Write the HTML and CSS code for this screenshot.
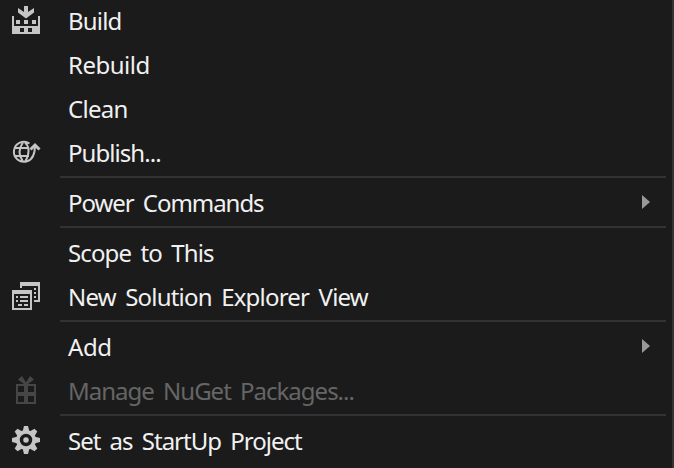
FILE: index.html
```html
<!DOCTYPE html>
<html lang="en">
<head>
<meta charset="utf-8">
<title>Project menu</title>
<link rel="stylesheet" href="styles.css">
</head>
<body>
<ul class="menu" role="menu">
  <li class="item" role="menuitem">
    <svg class="icon" viewBox="0 0 60 44"><path fill-rule="evenodd" d="M12 16h2v10h24V16h2v18H12zM20 28v4h4v-4zM28 28v4h4v-4zM16 20h4v4h-4zM24 20h4v4h-4zM32 20h4v4h-4zM24 6h4v6l6-4v4.500l-8 6-8-6V8l6 4z"/></svg>
    <span class="label build">Build</span>
  </li>
  <li class="item" role="menuitem"><span class="icon"></span><span class="label rebuild">Rebuild</span></li>
  <li class="item" role="menuitem"><span class="icon"></span><span class="label clean">Clean</span></li>
  <li class="item" role="menuitem">
    <svg class="icon line" viewBox="0 0 60 44"><path d="M29.500 11.500A10 10 0 1 0 27 29.300Q35 27 35 13M23 10.500q-7 9.500 0 19M25 10.500q5 4.500 3 12.500-1 4-3 6.500M15 16H29M15 24H29"/><path class="tip" d="M30.500 17.500l4.500-4.500 4.500 4.500"/></svg>
    <span class="label publish">Publish...</span>
  </li>
  <li class="separator" role="separator"></li>
  <li class="item" role="menuitem"><span class="icon"></span><span class="label power">Power Commands</span><span class="arrow"></span></li>
  <li class="separator" role="separator"></li>
  <li class="item" role="menuitem"><span class="icon"></span><span class="label scope">Scope to This</span></li>
  <li class="item" role="menuitem">
    <svg class="icon" viewBox="0 0 60 44"><path fill-rule="evenodd" d="M20 6h20v20h-6v-2h4V10H22v2h-2zM34 12h2v2h-2zM34 16h2v2h-2zM34 20h2v2h-2zM12 14h20v20H12zM14 18v14h16V18zM16 20h2v2h-2zM20 20h8v2h-8zM16 24h2v2h-2zM20 24h8v2h-8zM18 28h4v2h-4zM24 28h4v2h-4z"/></svg>
    <span class="label view">New Solution Explorer View</span>
  </li>
  <li class="separator" role="separator"></li>
  <li class="item" role="menuitem"><span class="icon"></span><span class="label add">Add</span><span class="arrow"></span></li>
  <li class="item disabled" role="menuitem" aria-disabled="true">
    <svg class="icon" viewBox="0 0 60 44"><path fill-rule="evenodd" d="M16 14h20v20H16zM18 16v6h6v-6zM28 16v6h6v-6zM18 26v6h6v-6zM28 26v6h6v-6zM18 9.500L22 6l4 6.500L30 6l4 3.500-6 4.500h-4z"/></svg>
    <span class="label manage">Manage NuGet Packages...</span>
  </li>
  <li class="separator" role="separator"></li>
  <li class="item" role="menuitem">
    <svg class="icon" viewBox="0 0 60 44"><g transform="translate(26 20)"><g id="teeth"><path id="tooth" d="M-3.500-8l1.500-6h4l1.500 6v16l-1.500 6h-4l-1.500-6z"/><use href="#tooth" transform="rotate(90)"/></g><use href="#teeth" transform="rotate(45)"/><circle r="10"/><circle class="hub" r="4.500"/></g></svg>
    <span class="label startup">Set as StartUp Project</span>
  </li>
</ul>
</body>
</html>
```
FILE: styles.css
```css
* { box-sizing: border-box; }

body {
  margin: 0;
  background: #1b1b1c;
  overflow: hidden;
}

.menu {
  height: 468px;
  margin: 0;
  padding: 0;
  list-style: none;
  border-right: 2px solid #333337;
  color: #f1f1f1;
  font: 24px/42px "Noto Sans", "Open Sans", sans-serif;
}

.item {
  display: flex;
  height: 44px;
  padding-right: 22px;
}

.icon {
  flex: none;
  width: 60px;
  height: 44px;
  fill: #c5c5c5;
}

.line {
  fill: none;
  stroke: #c5c5c5;
  stroke-width: 2;
}

.tip { stroke-width: 3; }

.hub {
  fill: none;
  stroke: #1b1b1c;
  stroke-width: 3.500;
}

.label {
  padding-left: 8px;
  white-space: nowrap;
  word-spacing: 4px;
  letter-spacing: -0.8px;
}

.rebuild { letter-spacing: -0.5px; }
.clean { letter-spacing: -0.7px; }
.publish { letter-spacing: -0.95px; }
.power { letter-spacing: -1.05px; }
.scope { letter-spacing: -0.88px; }
.add { letter-spacing: -0.4px; }
.manage { letter-spacing: -1px; }
.startup { letter-spacing: -1px; }

.arrow {
  width: 8px;
  height: 14px;
  margin: 13px 0 0 auto;
  background: #999;
  clip-path: polygon(0 0, 100% 50%, 0 100%);
}

.separator {
  height: 2px;
  margin: 0 6px 4px 60px;
  background: #333337;
}

.disabled { color: #656565; }
.disabled .icon { fill: #464646; }
```
